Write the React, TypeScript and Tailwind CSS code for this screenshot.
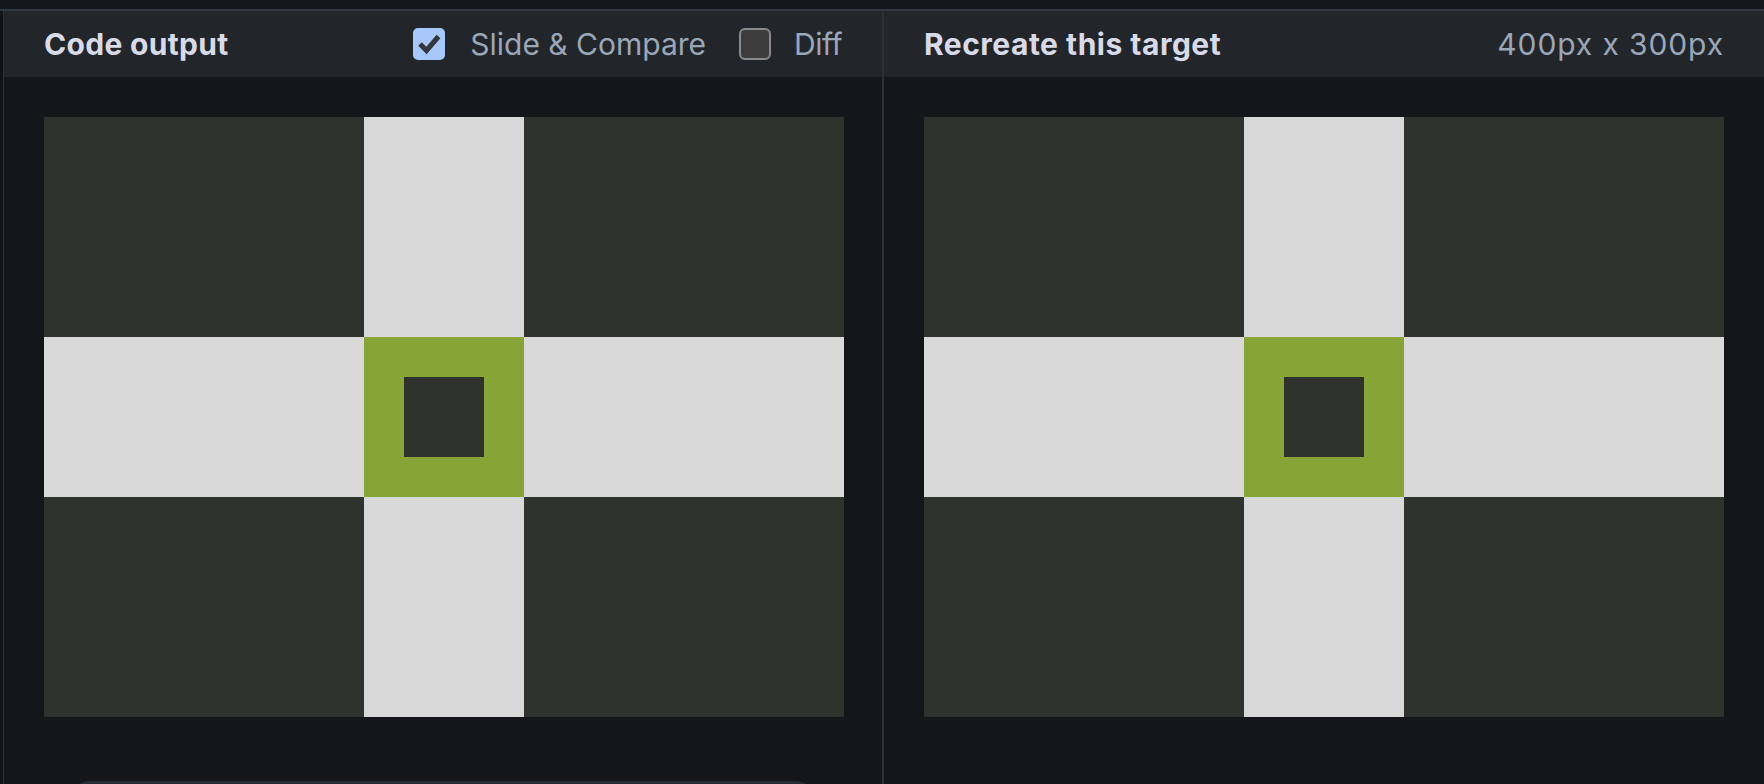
import React from 'react'

const font = { fontFamily: 'Inter, "Noto Sans", sans-serif' }

// the 400x300 target, shown at 2x
function Target() {
  const d = 'bg-[#2f322d]'
  const l = 'bg-[#d9d9d9]'
  return (
    <div className="grid grid-cols-[320px_160px_320px] grid-rows-[220px_160px_220px] w-[800px] h-[600px] shrink-0">
      <div className={d} />
      <div className={l} />
      <div className={d} />
      <div className={l} />
      <div className="bg-[#86a536] flex items-center justify-center">
        <div className="w-[80px] h-[80px] bg-[#2f322d]" />
      </div>
      <div className={l} />
      <div className={d} />
      <div className={l} />
      <div className={d} />
    </div>
  )
}

function Checkbox({ checked }: { checked: boolean }) {
  if (checked) {
    return (
      <div className="w-[32px] h-[32px] rounded-[5px] bg-[#a8c8fb] flex items-center justify-center shrink-0">
        <svg width="32" height="32" viewBox="0 0 32 32">
          <path d="M7 16 L13.5 22.5 L25.5 8.5" fill="none" stroke="#34373c" strokeWidth="5" />
        </svg>
      </div>
    )
  }
  return <div className="w-[32px] h-[32px] rounded-[6px] bg-[#3c3c3c] border-2 border-[#8a8a8c] shrink-0" />
}

export default function App() {
  return (
    <div className="w-full h-[784px] bg-[#121318] flex flex-col overflow-hidden" style={font}>
      <div className="h-[9px] bg-[#15171c] border-b-2 border-[#303843] box-content" />
      <div className="flex flex-1 pl-[3px] min-h-0">
        {/* left panel */}
        <div className="flex-1 flex flex-col border-l border-[#2b323a] min-w-0">
          <div className="h-[66px] bg-[#22262b] flex items-center justify-between px-[40px] shrink-0">
            <span className="text-[30px] font-bold text-[#d8dbe7] tracking-[0.3px]">Code output</span>
            <div className="flex items-center">
              <Checkbox checked />
              <span className="ml-[25px] text-[30px] text-[#9ba6b8]">Slide &amp; Compare</span>
              <div className="ml-[33px]">
                <Checkbox checked={false} />
              </div>
              <span className="ml-[23px] text-[30px] text-[#9ba6b8] tracking-[-0.5px]">Diff</span>
            </div>
          </div>
          <div className="flex-1 bg-[#15161a] pt-[40px] pl-[40px] flex flex-col">
            <Target />
            <div className="mt-[64px] ml-[26px] w-[746px] h-[40px] rounded-[24px] bg-[#262c31] shrink-0" />
          </div>
        </div>
        {/* right panel */}
        <div className="w-[882px] flex flex-col border-l-2 border-[#29313a] shrink-0">
          <div className="h-[66px] bg-[#22262b] flex items-center justify-between px-[40px] shrink-0">
            <span className="text-[30px] font-bold text-[#d8dbe7] tracking-[0.5px]">Recreate this target</span>
            <span className="text-[30px] text-[#9ba6b8] tracking-[0.9px]">400px x 300px</span>
          </div>
          <div className="flex-1 bg-[#15161a] pt-[40px] px-[40px]">
            <Target />
          </div>
        </div>
      </div>
    </div>
  )
}
